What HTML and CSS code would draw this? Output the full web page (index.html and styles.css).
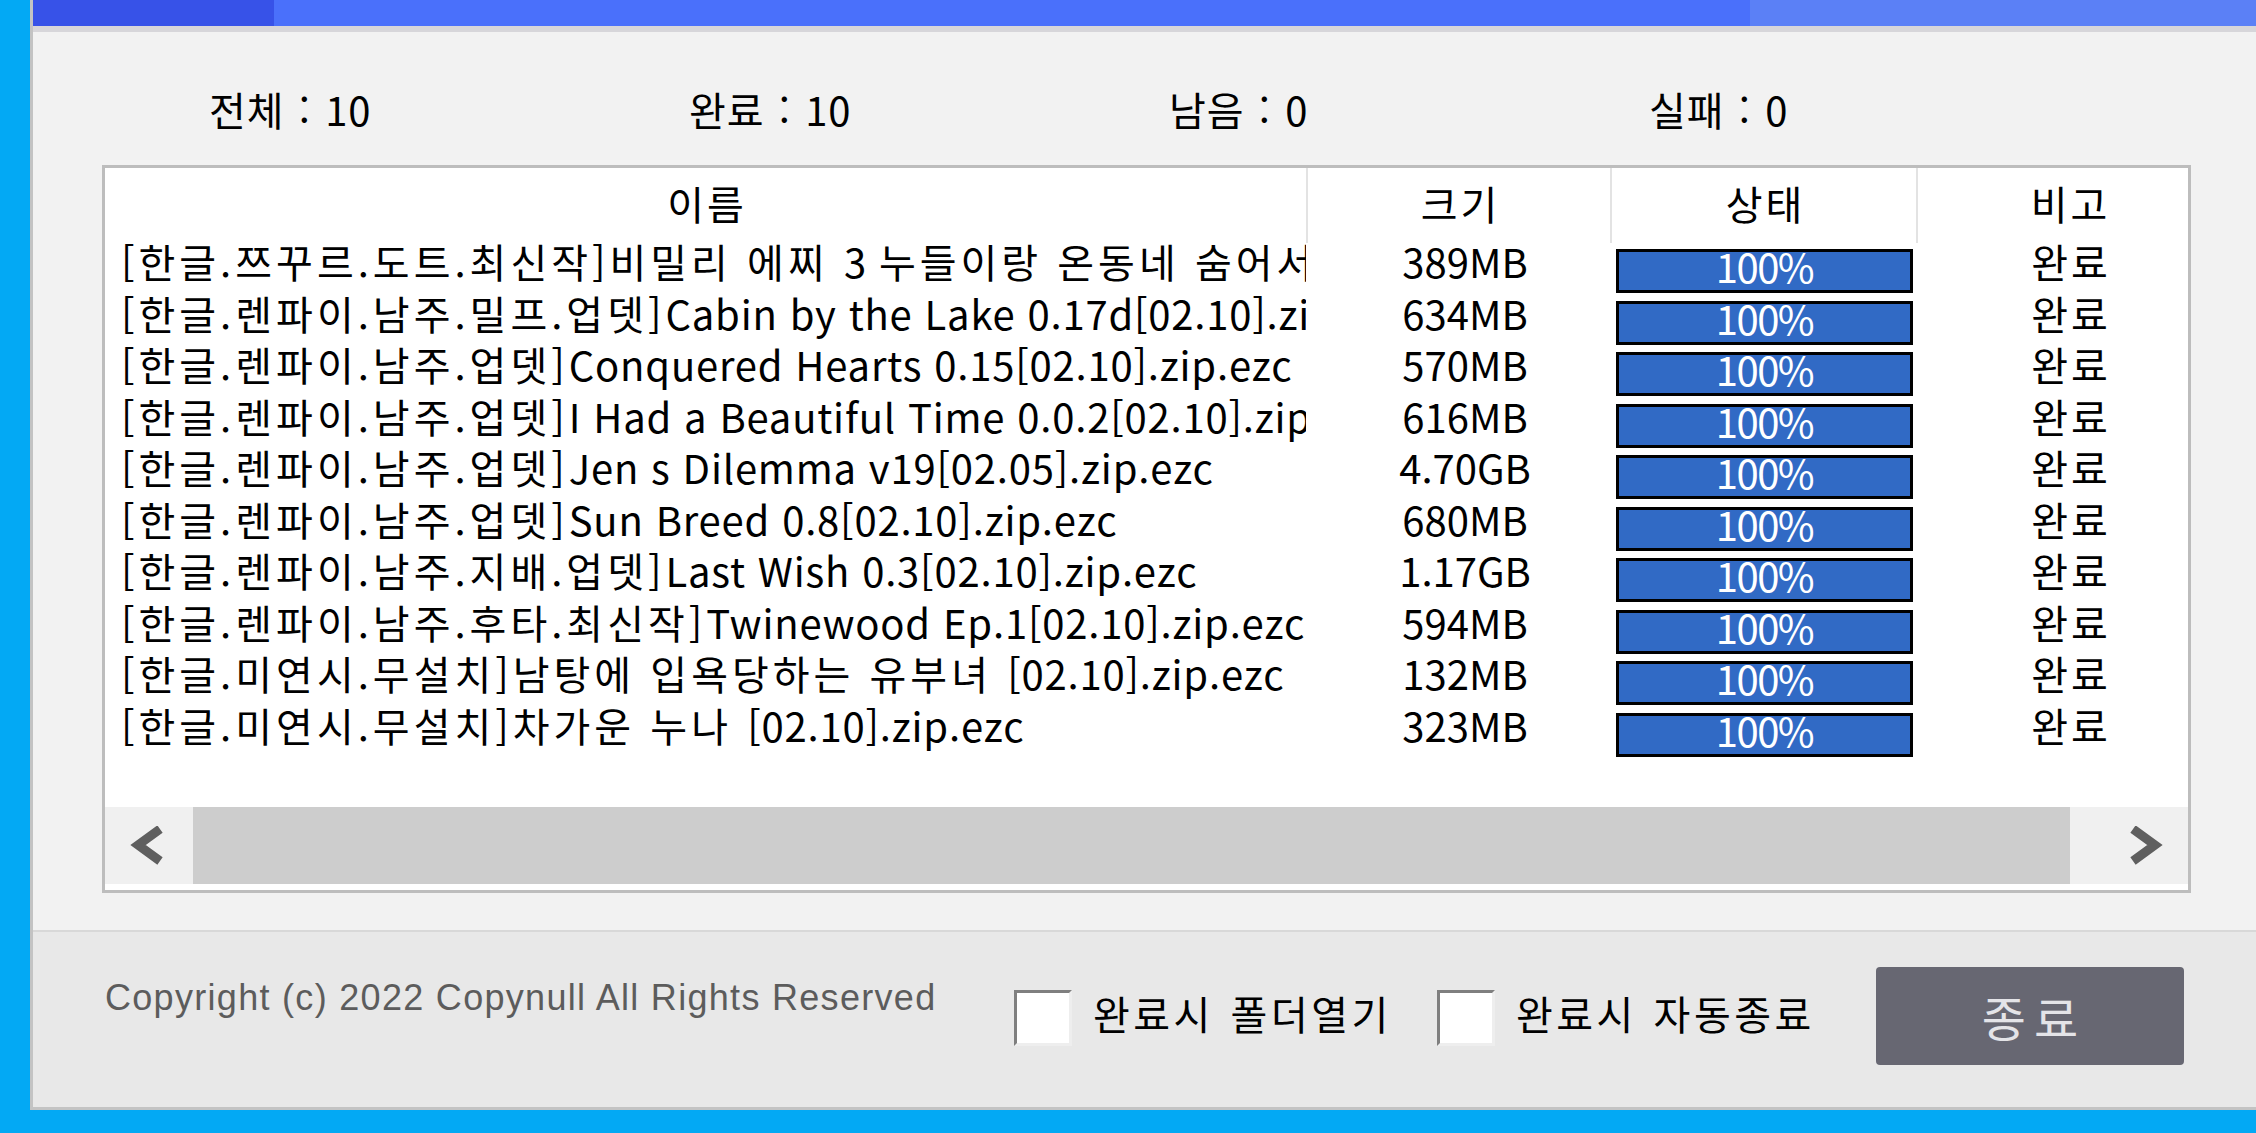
FILE: index.html
```html
<!DOCTYPE html>
<html lang="ko">
<head>
<meta charset="utf-8">
<title>다운로드</title>
<link rel="stylesheet" href="styles.css">
</head>
<body>
<div class="desktop">
  <div class="window">
    <div class="titlebar"></div>
    <div class="titlestrip"></div>
    <div class="panel">
      <div class="stats">
        <span>전체 : 10</span>
        <span>완료 : 10</span>
        <span>남음 : 0</span>
        <span>실패 : 0</span>
      </div>
      <div class="list">
        <div class="list-head">
          <div class="hcell">이름</div>
          <div class="hcell div">크기</div>
          <div class="hcell div">상태</div>
          <div class="hcell div">비고</div>
        </div>
        <div class="list-body">
          <div class="row"><div class="name"><span class="ko">[한글.쯔꾸르.도트.최신작]비밀리 에찌 </span>3 <span class="ko">누들이랑 온동네 숨어서</span></div><div class="size">389MB</div><div class="status"><div class="bar">100%</div></div><div class="note">완료</div></div>
          <div class="row"><div class="name"><span class="ko">[한글.렌파이.남주.밀프.업뎃]</span>Cabin by the Lake 0.17d[02.10].zip.ezc</div><div class="size">634MB</div><div class="status"><div class="bar">100%</div></div><div class="note">완료</div></div>
          <div class="row"><div class="name"><span class="ko">[한글.렌파이.남주.업뎃]</span>Conquered Hearts 0.15[02.10].zip.ezc</div><div class="size">570MB</div><div class="status"><div class="bar">100%</div></div><div class="note">완료</div></div>
          <div class="row"><div class="name"><span class="ko">[한글.렌파이.남주.업뎃]</span>I Had a Beautiful Time 0.0.2[02.10].zip.ezc</div><div class="size">616MB</div><div class="status"><div class="bar">100%</div></div><div class="note">완료</div></div>
          <div class="row"><div class="name"><span class="ko">[한글.렌파이.남주.업뎃]</span>Jen s Dilemma v19[02.05].zip.ezc</div><div class="size">4.70GB</div><div class="status"><div class="bar">100%</div></div><div class="note">완료</div></div>
          <div class="row"><div class="name"><span class="ko">[한글.렌파이.남주.업뎃]</span>Sun Breed 0.8[02.10].zip.ezc</div><div class="size">680MB</div><div class="status"><div class="bar">100%</div></div><div class="note">완료</div></div>
          <div class="row"><div class="name"><span class="ko">[한글.렌파이.남주.지배.업뎃]</span>Last Wish 0.3[02.10].zip.ezc</div><div class="size">1.17GB</div><div class="status"><div class="bar">100%</div></div><div class="note">완료</div></div>
          <div class="row"><div class="name"><span class="ko">[한글.렌파이.남주.후타.최신작]</span>Twinewood Ep.1[02.10].zip.ezc</div><div class="size">594MB</div><div class="status"><div class="bar">100%</div></div><div class="note">완료</div></div>
          <div class="row"><div class="name"><span class="ko">[한글.미연시.무설치]남탕에 입욕당하는 유부녀 </span>[02.10].zip.ezc</div><div class="size">132MB</div><div class="status"><div class="bar">100%</div></div><div class="note">완료</div></div>
          <div class="row"><div class="name"><span class="ko">[한글.미연시.무설치]차가운 누나 </span>[02.10].zip.ezc</div><div class="size">323MB</div><div class="status"><div class="bar">100%</div></div><div class="note">완료</div></div>
        </div>
        <div class="hscroll">
          <div class="arrow">
            <svg width="40" height="40" viewBox="0 0 40 40"><polyline points="31,3 9,19 31,35" fill="none" stroke="#5f5f5f" stroke-width="9" stroke-linejoin="miter"/></svg>
          </div>
          <div class="track"><div class="thumb"></div></div>
          <div class="arrow">
            <svg width="40" height="40" viewBox="0 0 40 40"><polyline points="9,3 31,19 9,35" fill="none" stroke="#5f5f5f" stroke-width="9" stroke-linejoin="miter"/></svg>
          </div>
        </div>
      </div>
    </div>
    <div class="footer">
      <div class="copyright">Copyright (c) 2022 Copynull All Rights Reserved</div>
      <label class="check g1"><span class="box"></span><span class="lbl">완료시 폴더열기</span></label>
      <label class="check g2"><span class="box"></span><span class="lbl">완료시 자동종료</span></label>
      <div class="btn">종료</div>
    </div>
  </div>
</div>
</body>
</html>
```
FILE: styles.css
```css
html, body {
  margin: 0;
  padding: 0;
}
body {
  width: 2256px;
  height: 1133px;
  overflow: hidden;
  background: #03a9f4;
  font-family: "Noto Sans CJK KR", "Noto Sans", sans-serif;
  color: #000;
}
.desktop {
  padding-left: 30px;
  height: 1110px;
  display: flex;
}
.window {
  flex: 1;
  height: 1107px;
  border-left: 3px solid #c3c3c3;
  border-bottom: 3px solid #c3c3c3;
  display: flex;
  flex-direction: column;
}
.titlebar {
  height: 26px;
  background: linear-gradient(to right, #3752e8 0, #3752e8 241px, #4a70fb 241px, #4a70fb 1717px, #5b80f6 1717px);
}
.titlestrip {
  height: 6px;
  background: #d7d6da;
}
.panel {
  height: 898px;
  background: #f2f2f2;
  border-bottom: 2px solid #d8d8d8;
}
.stats {
  display: grid;
  grid-template-columns: repeat(4, 480px);
  padding: 59px 0 0 176px;
  height: 36px;
  font-size: 40px;
  line-height: 36px;
  letter-spacing: 1px;
  word-spacing: 2px;
}
.list {
  margin: 38px 0 0 69px;
  width: 2083px;
  height: 722px;
  border: 3px solid #bdbdbd;
  background: #fff;
  overflow: hidden;
  display: flex;
  flex-direction: column;
}
.list-head, .row {
  display: grid;
  grid-template-columns: 1201px 304px 306px 304px;
  font-size: 40px;
}
.list-head {
  height: 75px;
  flex: none;
}
.hcell {
  text-align: center;
  line-height: 71px;
  white-space: nowrap;
  letter-spacing: 3px;
  padding-left: 3px;
}
.hcell.div {
  border-left: 2px solid #e3e3e3;
}
.list-body {
  height: 564px;
  flex: none;
}
.row {
  height: 51.5px;
  line-height: 36px;
}
.name {
  padding-left: 16px;
  overflow: hidden;
  white-space: nowrap;
  letter-spacing: 0.8px;
}
.ko {
  letter-spacing: 4px;
}
.size {
  text-align: center;
  padding-left: 14px;
  white-space: nowrap;
}
.note {
  text-align: center;
  white-space: nowrap;
  letter-spacing: 3px;
  padding-left: 6px;
}
.status {
  padding: 6px 0 0 6px;
}
.bar {
  box-sizing: border-box;
  width: 297px;
  height: 44px;
  border: 3px solid #000;
  background: #316ac5;
  color: #fff;
  font-size: 40px;
  line-height: 29px;
  letter-spacing: -1.5px;
  text-align: center;
}
.hscroll {
  height: 77px;
  flex: none;
  display: flex;
  background: #f0f0f0;
}
.arrow {
  width: 88px;
  display: flex;
  align-items: center;
  justify-content: center;
}
.track {
  flex: 1;
  display: flex;
}
.thumb {
  width: 1877px;
  background: #cdcdcd;
}
.footer {
  height: 175px;
  background: #e8e8e8;
  display: flex;
  align-items: flex-start;
  padding-left: 72px;
}
.copyright {
  width: 909px;
  margin-top: 46px;
  font-family: "Liberation Sans", Arial, sans-serif;
  font-size: 36px;
  line-height: 40px;
  letter-spacing: 1.3px;
  color: #5c5c5c;
  white-space: nowrap;
}
.check {
  display: flex;
  align-items: flex-start;
  margin-top: 58px;
}
.check.g1 {
  width: 423px;
}
.check.g2 {
  width: 439px;
}
.box {
  box-sizing: border-box;
  width: 58px;
  height: 56px;
  background: #fff;
  border-style: solid;
  border-width: 3px;
  border-color: #7f7f7f #eeeeee #eeeeee #7f7f7f;
  flex: none;
}
.lbl {
  margin: 5px 0 0 21px;
  font-size: 40px;
  line-height: 36px;
  white-space: nowrap;
  letter-spacing: 3.5px;
  word-spacing: 2px;
}
.btn {
  box-sizing: border-box;
  width: 308px;
  height: 98px;
  margin-top: 35px;
  padding-left: 8px;
  border-radius: 4px;
  background: #676772;
  color: #e4e4e8;
  font-size: 48px;
  letter-spacing: 8px;
  display: flex;
  align-items: center;
  justify-content: center;
}
```
